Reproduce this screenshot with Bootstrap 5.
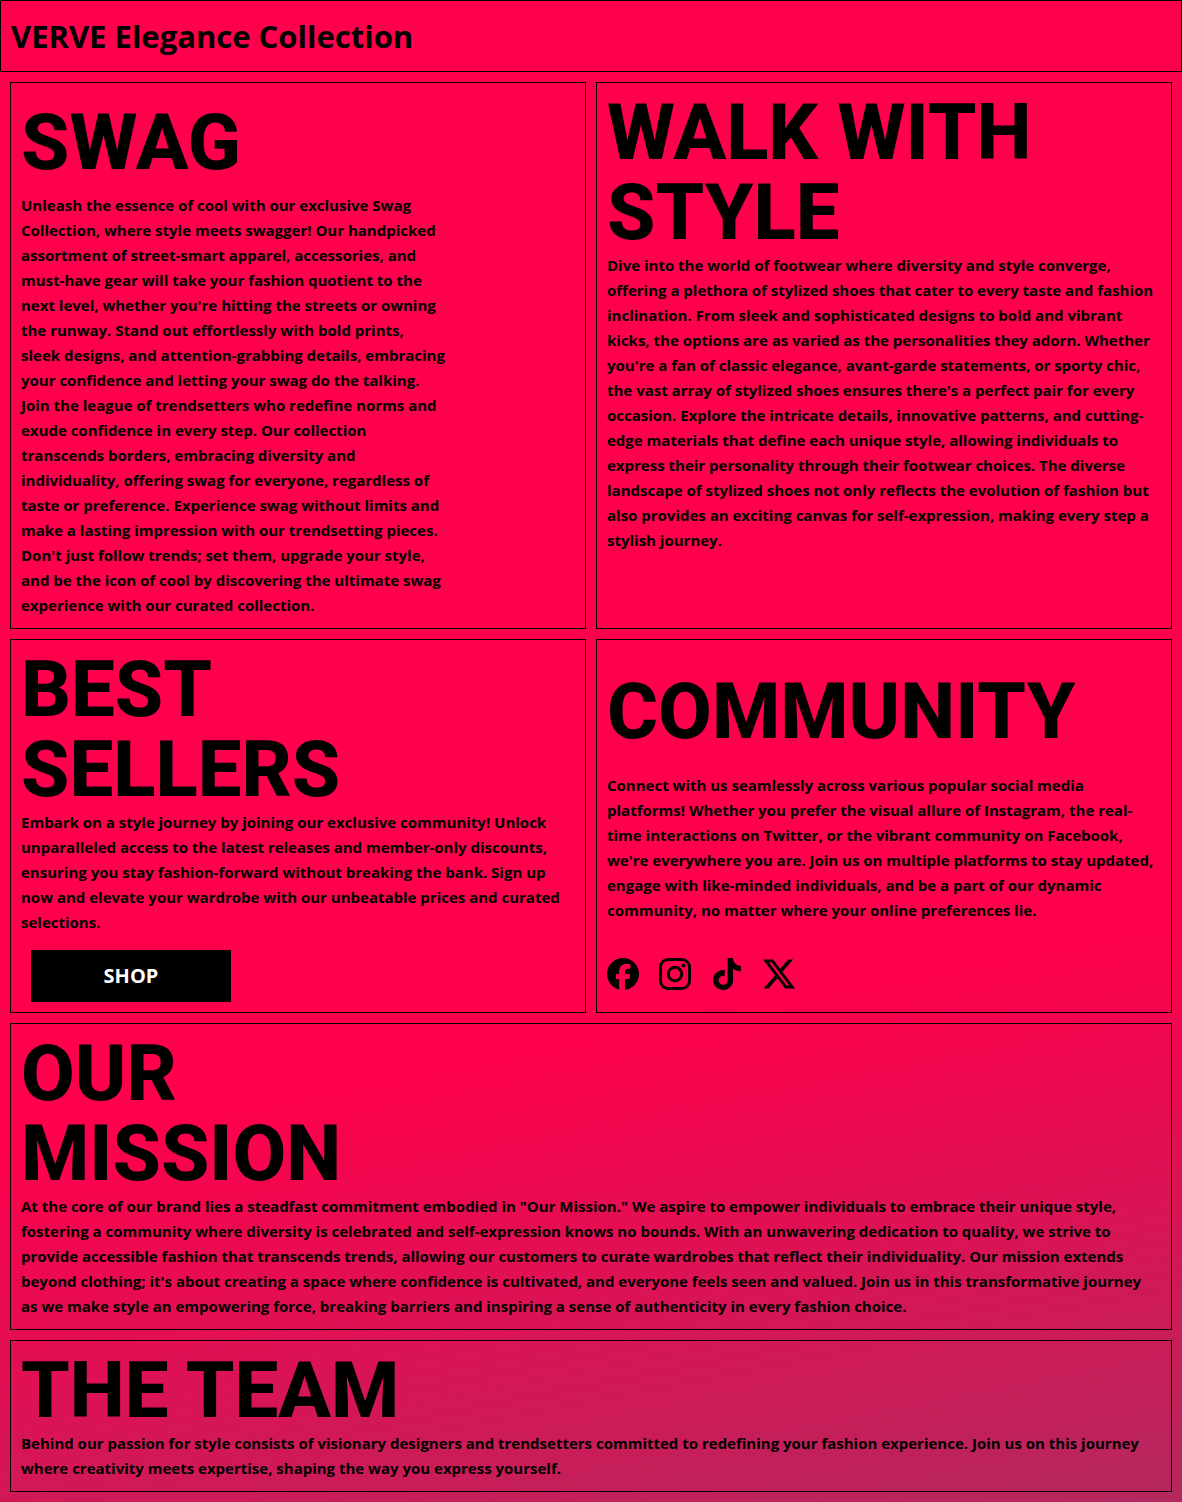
<!DOCTYPE html>
<html lang="en">
<head>
<meta charset="utf-8">
<meta name="viewport" content="width=device-width, initial-scale=1">
<title>VERVE Elegance Collection</title>
<link rel="stylesheet" href="https://cdn.jsdelivr.net/npm/bootstrap@5.3.0/dist/css/bootstrap.min.css">
<style>
  body {
    min-height: 100vh;
    color: #000;
    font: 700 15px/25px "Open Sans", sans-serif;
    background: linear-gradient(168.9deg, #ff004c 66%, #b3285e 100%) no-repeat;
  }
  .brand-bar { padding: 15px 10px; border: 1px solid #000; }
  .brand-bar h1 { font-size: 31px; line-height: 40px; font-weight: 700; }
  .tiles { padding: 10px; display: grid; gap: 10px; grid-template-columns: 1fr; }
  .tile { padding: 10px; border: 1px solid #000; }
  .tile h2 {
    margin: 0;
    font: 800 78px/80px Roboto, sans-serif;
  }
  .tile .title-roomy { padding: 10px 0; }
  .tile p { margin: 0; }
  .shop-btn {
    width: 200px; height: 52px; margin: 15px 0 0 10px;
    border-radius: 0; padding: 0;
    font-size: 20px; font-weight: 700;
  }
  .social { gap: 20px; padding: 35px 0 12px; }
  .social svg { width: 32px; height: 32px; display: block; }
  @media (min-width: 992px) {
    .tiles { grid-template-columns: 1fr 1fr; }
    .tile-wide { grid-column: 1 / -1; }
  }
</style>
<script src="https://cdn.jsdelivr.net/npm/bootstrap@5.3.0/dist/js/bootstrap.bundle.min.js"></script>
</head>
<body>
<header class="brand-bar">
  <h1 class="m-0">VERVE Elegance Collection</h1>
</header>
<main class="tiles">
  <section class="tile">
    <h2 class="title-roomy">SWAG</h2>
    <p>Unleash the essence of cool with our exclusive Swag<br>
    Collection, where style meets swagger! Our handpicked<br>
    assortment of street-smart apparel, accessories, and<br>
    must-have gear will take your fashion quotient to the<br>
    next level, whether you're hitting the streets or owning<br>
    the runway. Stand out effortlessly with bold prints,<br>
    sleek designs, and attention-grabbing details, embracing<br>
    your confidence and letting your swag do the talking.<br>
    Join the league of trendsetters who redefine norms and<br>
    exude confidence in every step. Our collection<br>
    transcends borders, embracing diversity and<br>
    individuality, offering swag for everyone, regardless of<br>
    taste or preference. Experience swag without limits and<br>
    make a lasting impression with our trendsetting pieces.<br>
    Don't just follow trends; set them, upgrade your style,<br>
    and be the icon of cool by discovering the ultimate swag<br>
    experience with our curated collection.</p>
  </section>
  <section class="tile">
    <h2>WALK WITH<br>STYLE</h2>
    <p>Dive into the world of footwear where diversity and style converge,<br>
    offering a plethora of stylized shoes that cater to every taste and fashion<br>
    inclination. From sleek and sophisticated designs to bold and vibrant<br>
    kicks, the options are as varied as the personalities they adorn. Whether<br>
    you're a fan of classic elegance, avant-garde statements, or sporty chic,<br>
    the vast array of stylized shoes ensures there's a perfect pair for every<br>
    occasion. Explore the intricate details, innovative patterns, and cutting-<br>
    edge materials that define each unique style, allowing individuals to<br>
    express their personality through their footwear choices. The diverse<br>
    landscape of stylized shoes not only reflects the evolution of fashion but<br>
    also provides an exciting canvas for self-expression, making every step a<br>
    stylish journey.</p>
  </section>
  <section class="tile">
    <h2>BEST<br>SELLERS</h2>
    <p>Embark on a style journey by joining our exclusive community! Unlock<br>
    unparalleled access to the latest releases and member-only discounts,<br>
    ensuring you stay fashion-forward without breaking the bank. Sign up<br>
    now and elevate your wardrobe with our unbeatable prices and curated<br>
    selections.</p>
    <button type="button" class="btn shop-btn text-white bg-black d-block">SHOP</button>
  </section>
  <section class="tile d-flex flex-column">
    <h2 class="flex-grow-1 d-flex align-items-center">COMMUNITY</h2>
    <p>Connect with us seamlessly across various popular social media<br>
    platforms! Whether you prefer the visual allure of Instagram, the real-<br>
    time interactions on Twitter, or the vibrant community on Facebook,<br>
    we're everywhere you are. Join us on multiple platforms to stay updated,<br>
    engage with like-minded individuals, and be a part of our dynamic<br>
    community, no matter where your online preferences lie.</p>
    <nav class="social d-flex" aria-label="Social media">
      <a href="#" class="text-black" aria-label="Facebook"><svg viewBox="0 0 24 24" fill="currentColor"><path d="M9.101 23.691v-7.98H6.627v-3.667h2.474v-1.58c0-4.085 1.848-5.978 5.858-5.978.401 0 .955.042 1.468.103a8.68 8.68 0 0 1 1.141.195v3.325a8.623 8.623 0 0 0-.653-.036 26.805 26.805 0 0 0-.733-.009c-.707 0-1.259.096-1.675.309a1.686 1.686 0 0 0-.679.622c-.258.42-.374.995-.374 1.752v1.297h3.919l-.386 2.103-.287 1.564h-3.246v8.245C19.396 23.238 24 18.179 24 12.044c0-6.627-5.373-12-12-12s-12 5.373-12 12c0 5.628 3.874 10.35 9.101 11.647Z"/></svg></a>
      <a href="#" class="text-black" aria-label="Instagram"><svg viewBox="0 0 16 16" fill="none" stroke="currentColor" stroke-width="1.45"><rect x=".73" y=".73" width="14.54" height="14.54" rx="3.9"/><circle cx="8" cy="8" r="3.38"/><circle cx="12.27" cy="3.73" r=".96" fill="currentColor" stroke="none"/></svg></a>
      <a href="#" class="text-black" aria-label="TikTok"><svg viewBox="0 0 24 24" fill="currentColor"><path d="M12.525.02c1.31-.02 2.61-.01 3.91-.02.08 1.53.63 3.09 1.75 4.17 1.12 1.11 2.7 1.62 4.24 1.79v4.03c-1.44-.05-2.89-.35-4.2-.97-.57-.26-1.1-.59-1.62-.93-.01 2.92.01 5.84-.02 8.75-.08 1.4-.54 2.79-1.35 3.94-1.31 1.92-3.58 3.17-5.91 3.21-1.43.08-2.86-.31-4.08-1.03-2.02-1.19-3.44-3.37-3.65-5.71-.02-.5-.03-1-.01-1.49.18-1.9 1.12-3.72 2.58-4.96 1.66-1.44 3.98-2.13 6.15-1.72.02 1.48-.04 2.96-.04 4.44-.99-.32-2.15-.23-3.02.37-.63.41-1.11 1.04-1.36 1.75-.21.51-.15 1.07-.14 1.61.24 1.64 1.82 3.02 3.5 2.87 1.12-.01 2.19-.66 2.77-1.61.19-.33.4-.67.41-1.06.1-1.79.06-3.57.07-5.36.01-4.03-.01-8.05.02-12.07z"/></svg></a>
      <a href="#" class="text-black" aria-label="X"><svg viewBox="0 0 24 24" fill="currentColor"><path d="M18.901 1.153h3.68l-8.04 9.19L24 22.846h-7.406l-5.8-7.584-6.638 7.584H.474l8.6-9.83L0 1.154h7.594l5.243 6.932ZM17.61 20.644h2.039L6.486 3.24H4.298Z"/></svg></a>
    </nav>
  </section>
  <section class="tile tile-wide">
    <h2>OUR<br>MISSION</h2>
    <p>At the core of our brand lies a steadfast commitment embodied in "Our Mission." We aspire to empower individuals to embrace their unique style,<br>
    fostering a community where diversity is celebrated and self-expression knows no bounds. With an unwavering dedication to quality, we strive to<br>
    provide accessible fashion that transcends trends, allowing our customers to curate wardrobes that reflect their individuality. Our mission extends<br>
    beyond clothing; it's about creating a space where confidence is cultivated, and everyone feels seen and valued. Join us in this transformative journey<br>
    as we make style an empowering force, breaking barriers and inspiring a sense of authenticity in every fashion choice.</p>
  </section>
  <section class="tile tile-wide">
    <h2>THE TEAM</h2>
    <p>Behind our passion for style consists of visionary designers and trendsetters committed to redefining your fashion experience. Join us on this journey<br>
    where creativity meets expertise, shaping the way you express yourself.</p>
  </section>
</main>
</body>
</html>
